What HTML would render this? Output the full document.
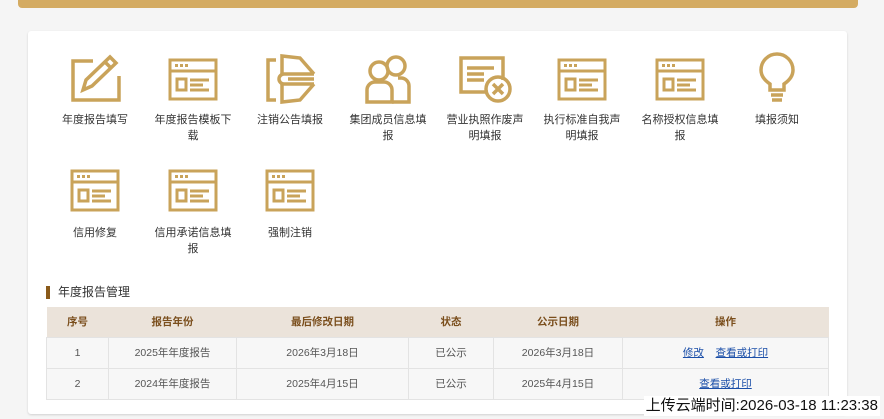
<!DOCTYPE html>
<html><head><meta charset="utf-8"><style>
*{margin:0;padding:0;box-sizing:border-box}
body{width:884px;height:419px;background:#f5f5f5;font-family:"Liberation Sans","Noto Sans CJK SC",sans-serif;position:relative;overflow:hidden;font-size:11px;color:#333}
.top{position:absolute;left:18px;top:-4px;width:840px;height:12px;background:#d4ab62;border-radius:4px}
.card{position:absolute;left:28px;top:31px;width:819px;height:383px;background:#fff;border-radius:3px;box-shadow:0 1px 2px rgba(0,0,0,.15)}
.ic{position:absolute;width:90px;text-align:center}
.ic svg{display:block;margin:0 auto}
.lb{position:absolute;width:90px;text-align:center;font-size:11px;line-height:16px;color:#333}
.sec{position:absolute;left:46px;top:286px;font-size:12px;color:#333;padding-left:8px;border-left:4px solid #8a5a1a;line-height:13px}
table{position:absolute;left:46px;top:307px;width:783px;border-collapse:collapse;font-size:10.5px}
th{background:#ebe3da;color:#7a4e1c;height:30px;font-weight:bold}
td{background:#f7f7f7;height:31px;text-align:center;color:#555;border:1px solid #e3e3e3}
a{color:#1a4ea8;text-decoration:underline}
.ts{position:absolute;right:4px;top:396px;font-size:15px;color:#111;background:#fff;padding:0 2px;line-height:20px}
</style></head><body>
<div class="top"></div>
<div class="card"></div>
<svg width="0" height="0" style="position:absolute"><defs>
<g id="form" fill="none" stroke="#c9a35a" stroke-width="3"><rect x="2" y="2" width="46" height="39"/><line x1="2" y1="13" x2="48" y2="13"/><rect x="9" y="21" width="9" height="11"/><line x1="22" y1="22" x2="41" y2="22"/><line x1="22" y1="27" x2="35" y2="27"/><line x1="22" y1="32" x2="41" y2="32"/><g stroke="none" fill="#c9a35a"><rect x="7" y="6" width="3" height="3"/><rect x="12" y="6" width="3" height="3"/><rect x="17" y="6" width="3" height="3"/></g></g>
</defs></svg>

<div class="ic" style="left:50px;top:52px"><svg width="52" height="52" viewBox="0 0 52 52" fill="none" stroke="#c9a35a" stroke-width="3.5"><path d="M24 9H4V48H50V24"/><path d="M14 38L17 28L41 5L47 11L23 34Z"/><line x1="36" y1="10" x2="42" y2="16"/></svg></div>
<div class="ic" style="left:148px;top:58px"><svg width="50" height="44"><use href="#form"/></svg></div>
<div class="ic" style="left:245px;top:52px"><svg width="52" height="52" viewBox="0 0 52 52" fill="none" stroke="#c9a35a" stroke-width="3.5"><path d="M12 8H4V48H12"/><path d="M18 22V4L36 6L50 22"/><path d="M18 32V50L36 48L50 32"/><path d="M50 22H20A5 5 0 0 0 20 32H50"/><line x1="24" y1="27" x2="50" y2="27"/></svg></div>
<div class="ic" style="left:343px;top:52px"><svg width="52" height="52" viewBox="0 0 52 52" fill="none" stroke="#c9a35a" stroke-width="3.5"><circle cx="17" cy="19" r="9"/><circle cx="34" cy="14" r="9"/><path d="M5 50V38A8 8 0 0 1 13 30H22A8 8 0 0 1 30 38V50Z"/><path d="M30 50H47V34A8 8 0 0 0 39 26H36"/></svg></div>
<div class="ic" style="left:440px;top:52px"><svg width="54" height="52" viewBox="0 0 54 52" fill="none" stroke="#c9a35a" stroke-width="3.5"><path d="M30 40H3V6H45V28"/><line x1="9" y1="16" x2="36" y2="16"/><line x1="9" y1="22" x2="26" y2="22"/><line x1="9" y1="28" x2="26" y2="28"/><circle cx="40" cy="37" r="12"/><path d="M35 32L45 42M45 32L35 42"/></svg></div>
<div class="ic" style="left:537px;top:58px"><svg width="50" height="44"><use href="#form"/></svg></div>
<div class="ic" style="left:635px;top:58px"><svg width="50" height="44"><use href="#form"/></svg></div>
<div class="ic" style="left:732px;top:52px"><svg width="52" height="52" viewBox="0 0 52 52" fill="none" stroke="#c9a35a" stroke-width="3.5"><path d="M19 38V32C13 28 10 23 10 18A16 16 0 0 1 42 18C42 23 39 28 33 32V38Z"/><line x1="20" y1="43" x2="32" y2="43"/><line x1="21" y1="48" x2="31" y2="48"/></svg></div>

<div class="lb" style="left:50px;top:112px">年度报告填写</div>
<div class="lb" style="left:148px;top:112px">年度报告模板下<br>载</div>
<div class="lb" style="left:245px;top:112px">注销公告填报</div>
<div class="lb" style="left:343px;top:112px">集团成员信息填<br>报</div>
<div class="lb" style="left:440px;top:112px">营业执照作废声<br>明填报</div>
<div class="lb" style="left:537px;top:112px">执行标准自我声<br>明填报</div>
<div class="lb" style="left:635px;top:112px">名称授权信息填<br>报</div>
<div class="lb" style="left:732px;top:112px">填报须知</div>

<div class="ic" style="left:50px;top:169px"><svg width="50" height="44"><use href="#form"/></svg></div>
<div class="ic" style="left:148px;top:169px"><svg width="50" height="44"><use href="#form"/></svg></div>
<div class="ic" style="left:245px;top:169px"><svg width="50" height="44"><use href="#form"/></svg></div>
<div class="lb" style="left:50px;top:225px">信用修复</div>
<div class="lb" style="left:148px;top:225px">信用承诺信息填<br>报</div>
<div class="lb" style="left:245px;top:225px">强制注销</div>

<div class="sec">年度报告管理</div>
<table>
<tr><th style="width:62px">序号</th><th style="width:128px">报告年份</th><th style="width:172px">最后修改日期</th><th style="width:85px">状态</th><th style="width:129px">公示日期</th><th>操作</th></tr>
<tr><td>1</td><td>2025年年度报告</td><td>2026年3月18日</td><td>已公示</td><td>2026年3月18日</td><td><a>修改</a>&nbsp;&nbsp;&nbsp; <a>查看或打印</a></td></tr>
<tr><td>2</td><td>2024年年度报告</td><td>2025年4月15日</td><td>已公示</td><td>2025年4月15日</td><td><a>查看或打印</a></td></tr>
</table>
<div class="ts">上传云端时间:2026-03-18 11:23:38</div>
</body></html>
